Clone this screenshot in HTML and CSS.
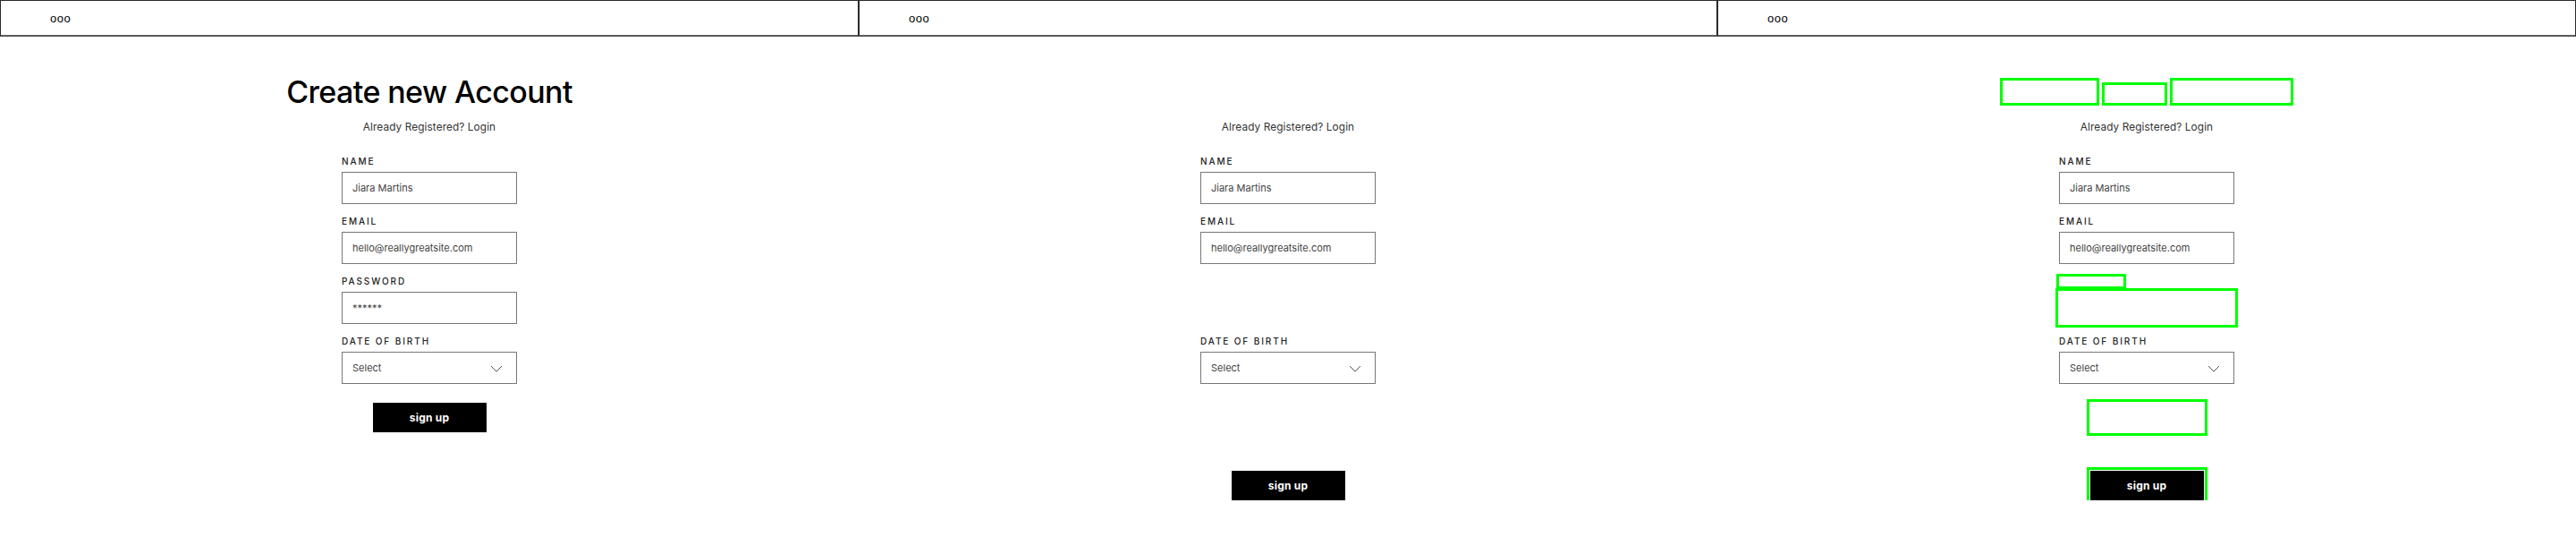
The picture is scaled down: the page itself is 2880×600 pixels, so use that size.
FILE: index.html
```html
<!DOCTYPE html>
<html lang="en">
<head>
<meta charset="utf-8">
<title>Create new Account</title>
<link rel="stylesheet" href="styles.css">
</head>
<body>
<div class="screens">

  <section class="screen">
    <header class="bar"><span class="dots">ooo</span></header>
    <main class="content">
      <h1 class="title">Create new Account</h1>
      <p class="sub">Already Registered? Login</p>
      <div class="form">
        <div class="field"><span class="label">NAME</span><div class="box">Jiara Martins</div></div>
        <div class="field"><span class="label">EMAIL</span><div class="box">hello@reallygreatsite.com</div></div>
        <div class="field"><span class="label">PASSWORD</span><div class="box">******</div></div>
        <div class="field"><span class="label">DATE OF BIRTH</span><div class="box select"><span>Select</span><svg class="chev" width="14" height="8" viewBox="0 0 14 8"><polyline points="1,1 7,7 13,1" fill="none" stroke="#555" stroke-width="1"/></svg></div></div>
      </div>
      <button class="btn" type="button">sign up</button>
    </main>
  </section>

  <section class="screen">
    <header class="bar"><span class="dots">ooo</span></header>
    <main class="content">
      <h1 class="title hidden">Create new Account</h1>
      <p class="sub">Already Registered? Login</p>
      <div class="form">
        <div class="field"><span class="label">NAME</span><div class="box">Jiara Martins</div></div>
        <div class="field"><span class="label">EMAIL</span><div class="box">hello@reallygreatsite.com</div></div>
        <div class="field hidden"><span class="label">PASSWORD</span><div class="box">******</div></div>
        <div class="field"><span class="label">DATE OF BIRTH</span><div class="box select"><span>Select</span><svg class="chev" width="14" height="8" viewBox="0 0 14 8"><polyline points="1,1 7,7 13,1" fill="none" stroke="#555" stroke-width="1"/></svg></div></div>
      </div>
      <button class="btn hidden" type="button">sign up</button>
      <button class="btn btn-second" type="button">sign up</button>
    </main>
  </section>

  <section class="screen">
    <header class="bar"><span class="dots">ooo</span></header>
    <main class="content">
      <h1 class="title title-ghost"><span class="gw">Create</span><span class="gw gw-short">new</span><span class="gw">Account</span></h1>
      <p class="sub">Already Registered? Login</p>
      <div class="form">
        <div class="field"><span class="label">NAME</span><div class="box">Jiara Martins</div></div>
        <div class="field"><span class="label">EMAIL</span><div class="box">hello@reallygreatsite.com</div></div>
        <div class="field"><span class="label ghost">PASSWORD</span><div class="box ghost ghost-box">******</div></div>
        <div class="field"><span class="label">DATE OF BIRTH</span><div class="box select"><span>Select</span><svg class="chev" width="14" height="8" viewBox="0 0 14 8"><polyline points="1,1 7,7 13,1" fill="none" stroke="#555" stroke-width="1"/></svg></div></div>
      </div>
      <button class="btn ghost ghost-btn" type="button">sign up</button>
      <button class="btn btn-second marked" type="button">sign up</button>
    </main>
  </section>

</div>
</body>
</html>
```
FILE: styles.css
```css
* { box-sizing: border-box; }

html, body {
  margin: 0;
  padding: 0;
  background: #fff;
}

body {
  font-family: Inter, "Liberation Sans", sans-serif;
  color: #222;
}

.screens {
  display: flex;
  width: 2880px;
}

.screen {
  width: 960px;
  flex: 0 0 960px;
}

.bar {
  height: 41px;
  border: 1px solid #2a2a2a;
  border-bottom: 2px solid #5a5a5a;
  display: flex;
  align-items: center;
  padding-left: 55px;
}

.dots {
  font-family: "Liberation Sans", sans-serif;
  font-size: 13px;
  letter-spacing: 0.5px;
  color: #000;
  line-height: 1;
}

.content {
  display: flex;
  flex-direction: column;
  align-items: center;
  padding-top: 41px;
}

.title {
  margin: 0;
  font-size: 34px;
  line-height: 41px;
  height: 41px;
  font-weight: 500;
  color: #000;
  letter-spacing: -0.6px;
  white-space: nowrap;
}

.title-ghost {
  display: flex;
  align-items: flex-end;
  gap: 9.5px;
  padding-bottom: 8px;
}

.gw {
  display: block;
  color: transparent;
  height: 25px;
  line-height: 25px;
  outline: 3px solid #00ff00;
}

.gw-short {
  height: 20px;
  line-height: 20px;
}

.sub {
  margin: 10px 0 0;
  font-size: 11.8px;
  line-height: 18px;
  letter-spacing: 0.1px;
  color: #333;
}

.form {
  width: 196px;
  margin-top: 24px;
  display: flex;
  flex-direction: column;
  gap: 14px;
}

.field {
  display: flex;
  flex-direction: column;
  align-items: flex-start;
}

.label {
  display: block;
  font-size: 10px;
  line-height: 11px;
  letter-spacing: 1.9px;
  color: #222;
  margin-bottom: 6px;
  font-weight: 500;
}

.box {
  width: 196px;
  height: 36px;
  border: 1px solid #777;
  padding: 0 11px;
  display: flex;
  align-items: center;
  font-size: 11px;
  color: #444;
}

.select {
  justify-content: space-between;
  padding-right: 15px;
}

.chev {
  display: block;
  margin-top: 2px;
}

.btn {
  margin-top: 21px;
  width: 127px;
  height: 33px;
  border: 0;
  background: #000;
  color: #fff;
  font-family: Inter, "Liberation Sans", sans-serif;
  font-size: 12px;
  font-weight: 700;
  letter-spacing: 0.2px;
  padding: 0;
}

.btn-second {
  margin-top: 43px;
}

.hidden {
  visibility: hidden;
}

.ghost {
  color: transparent;
  background: transparent;
  border-color: transparent;
  outline: 3px solid #00ff00;
}

.ghost-box {
  outline-offset: 1px;
}

.ghost-btn {
  outline-offset: 1px;
}

.marked {
  outline: 3px solid #00ff00;
  outline-offset: 1px;
}
```
